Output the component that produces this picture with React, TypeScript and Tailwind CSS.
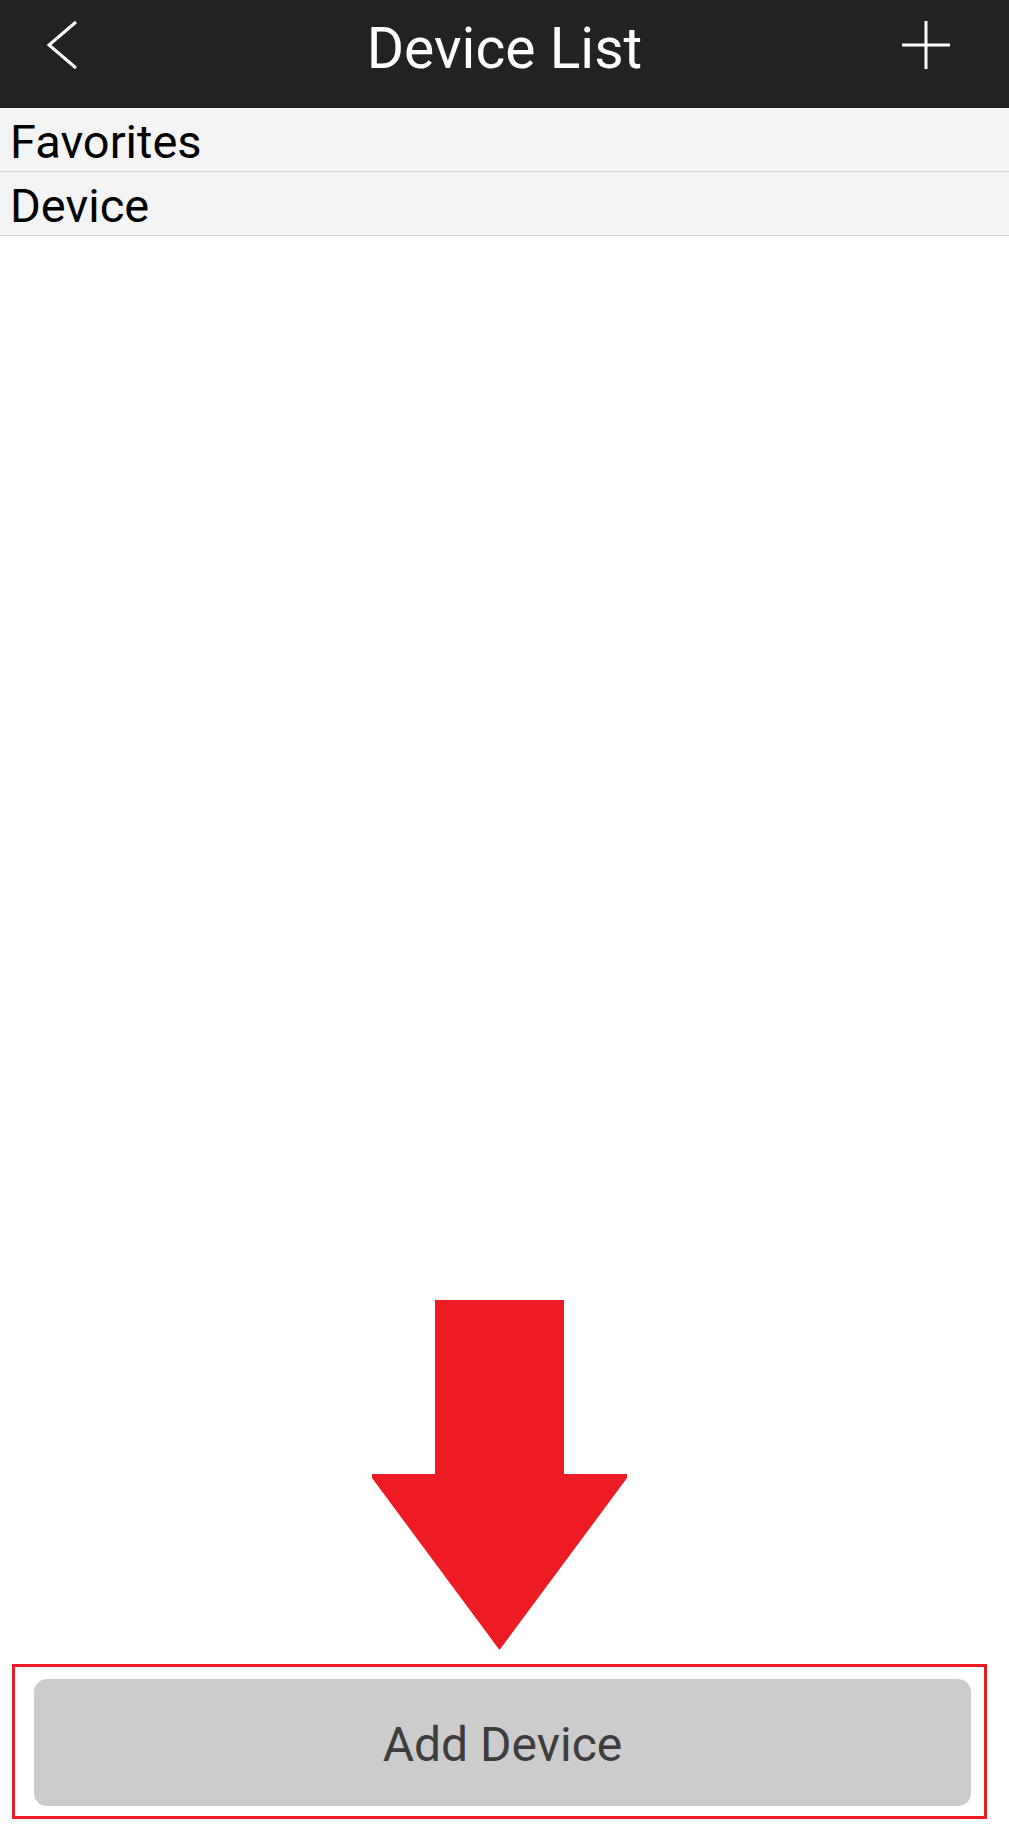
import React from "react";

export default function App() {
  return (
    <div className="flex min-h-[1825px] w-[1009px] flex-col bg-white" style={{ fontFamily: "Roboto, 'Noto Sans', sans-serif" }}>
      {/* Header */}
      <div className="flex h-[108px] items-start bg-[#222222]">
        <div className="flex w-[200px] pl-[46px]">
          <svg className="mt-[20px]" width="32" height="50" viewBox="0 0 32 50" fill="none">
            <polyline points="30,2 3,25 30,48" stroke="#ffffff" strokeWidth="3" strokeLinejoin="miter" />
          </svg>
        </div>
        <div className="flex flex-1 justify-center">
          <span className="mt-[15px] text-[57px] leading-[67px] text-white">Device List</span>
        </div>
        <div className="flex w-[200px] justify-end pr-[57px]">
          <svg className="mt-[19px]" width="52" height="52" viewBox="0 0 52 52" fill="none">
            <line x1="26" y1="2" x2="26" y2="50" stroke="#ffffff" strokeWidth="3" />
            <line x1="2" y1="26" x2="50" y2="26" stroke="#ffffff" strokeWidth="3" />
          </svg>
        </div>
      </div>

      {/* Rows */}
      <div className="h-[64px] border-b border-[#d4d4d4] bg-[#f4f4f4] pl-[10px] pt-[6px] text-[47px] leading-[56px] text-black">
        Favorites
      </div>
      <div className="h-[64px] border-b border-[#d4d4d4] bg-[#f4f4f4] pl-[10px] pt-[6px] text-[47px] leading-[56px] text-black">
        Device
      </div>

      <div className="flex-1" />

      {/* Arrow annotation */}
      <svg className="ml-[372px] block" width="255" height="350" viewBox="0 0 255 350">
        <polygon points="63,0 192,0 192,174 255,174 255,178 127.5,350 0,178 0,174 63,174" fill="#ed1c24" />
      </svg>

      {/* Highlighted button */}
      <div className="ml-[12px] mt-[14px] mb-[6px] h-[155px] w-[975px] border-[3px] border-[#ed1c24] pl-[19px] pt-[12px]">
        <div className="flex h-[127px] w-[937px] items-center justify-center rounded-[13px] bg-[#cccccc] pt-[4px]">
          <span className="text-[48px] leading-[56px] text-[#3d3d3d]">Add Device</span>
        </div>
      </div>
    </div>
  );
}
